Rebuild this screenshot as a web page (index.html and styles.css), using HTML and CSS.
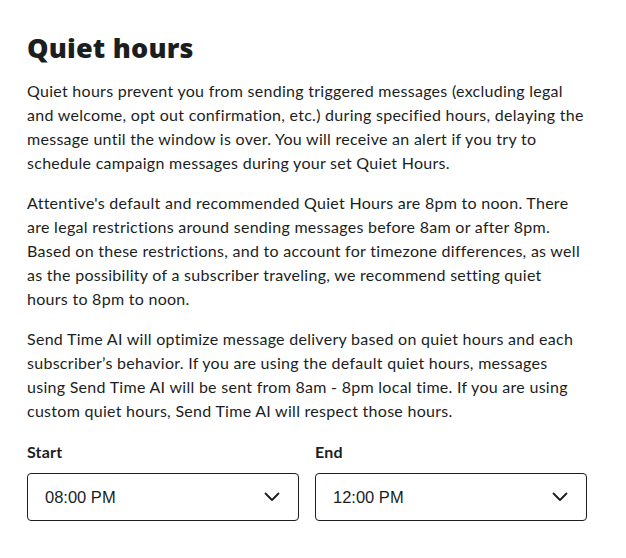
FILE: index.html
```html
<!DOCTYPE html>
<html>
<head>
<meta charset="utf-8">
<link rel="stylesheet" href="styles.css">
</head>
<body>
<div class="page">
  <h1 class="title">Quiet hours</h1>
  <div class="text">
    <p class="para">Quiet hours prevent you from sending triggered messages (excluding legal and welcome, opt out confirmation, etc.) during specified hours, delaying the message until the window is over. You will receive an alert if you try to schedule campaign messages during your set Quiet Hours.</p>
    <p class="para">Attentive's default and recommended Quiet Hours are 8pm to noon. There are legal restrictions around sending messages before 8am or after 8pm. Based on these restrictions, and to account for timezone differences, as well as the possibility of a subscriber traveling, we recommend setting quiet hours to 8pm to noon.</p>
    <p class="para">Send Time AI will optimize message delivery based on quiet hours and each subscriber’s behavior. If you are using the default quiet hours, messages using Send Time AI will be sent from 8am - 8pm local time. If you are using custom quiet hours, Send Time AI will respect those hours.</p>
  </div>
  <div class="fields">
    <div class="field">
      <div class="label">Start</div>
      <div class="select">
        <span class="value">08:00 PM</span>
        <svg class="chev" width="16" height="10" viewBox="0 0 16 10"><path d="M1.5 1.5 L8 8 L14.5 1.5" fill="none" stroke="#1b1e1e" stroke-width="1.8" stroke-linecap="round" stroke-linejoin="round"/></svg>
      </div>
    </div>
    <div class="field">
      <div class="label">End</div>
      <div class="select">
        <span class="value">12:00 PM</span>
        <svg class="chev" width="16" height="10" viewBox="0 0 16 10"><path d="M1.5 1.5 L8 8 L14.5 1.5" fill="none" stroke="#1b1e1e" stroke-width="1.8" stroke-linecap="round" stroke-linejoin="round"/></svg>
      </div>
    </div>
  </div>
</div>
</body>
</html>
```
FILE: styles.css
```css
html, body { margin: 0; padding: 0; background: #fff; }
.page {
  width: 560px;
  padding: 30px 27px 0 27px;
  color: #1b1e1e;
  font-family: Lato, "Noto Sans", sans-serif;
}
.title {
  margin: 0 0 13px 0;
  font-family: "Open Sans", sans-serif;
  font-weight: 800;
  font-size: 27px;
  line-height: 36px;
  letter-spacing: 0.2px;
}
.text { width: 558px; }
.para {
  margin: 0 0 16px 0;
  font-size: 16px;
  line-height: 24px;
  letter-spacing: 0.28px;
}
.fields {
  display: flex;
  gap: 16px;
  margin-top: 19px;
}
.field { flex: 1; }
.label {
  font-weight: 700;
  font-size: 16px;
  line-height: 20px;
  margin-bottom: 11px;
  letter-spacing: 0.2px;
}
.select {
  height: 46px;
  border: 1px solid #1b1e1e;
  border-radius: 4px;
  display: flex;
  align-items: center;
  justify-content: space-between;
  padding: 0 18px 0 17px;
}
.value {
  font-family: "Liberation Sans", Arial, sans-serif;
  font-size: 16.5px;
}
```
